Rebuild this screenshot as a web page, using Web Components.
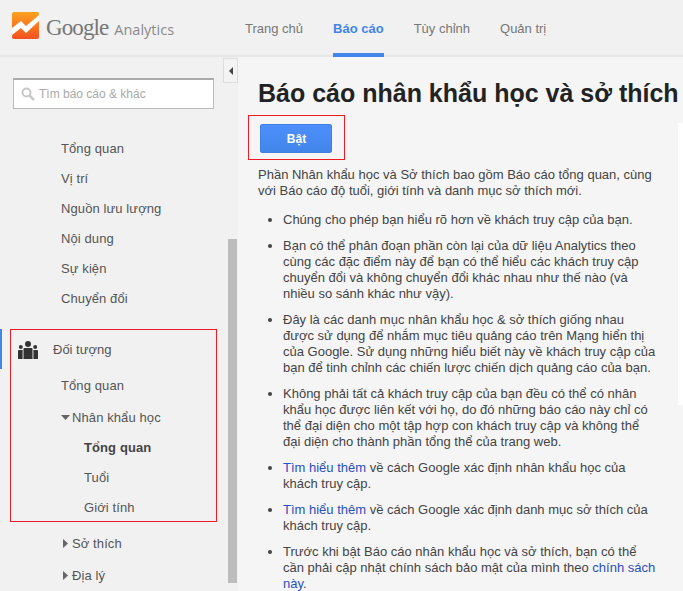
<!DOCTYPE html>
<html>
<head>
<meta charset="utf-8">
<style>
  html, body { margin: 0; padding: 0; height: 591px; overflow: hidden; background: #f1f1f1; }
  body { font-family: "Liberation Sans", Arial, sans-serif; color: #444; }
</style>
</head>
<body>
<ga-app></ga-app>
<script>
class GaHeader extends HTMLElement {
  connectedCallback() {
    this.attachShadow({ mode: 'open' });
    this.shadowRoot.innerHTML = `
      <style>
        :host { display: flex; height: 57px; box-sizing: border-box; border-bottom: 2px solid #e6e6e6; background: #f1f1f1; font-size: 13px; }
        .logo { width: 245px; display: flex; align-items: flex-start; padding: 12px 0 0 12px; box-sizing: border-box; }
        .word { margin-left: 7px; color: #767676; font-size: 23px; line-height: 32px; letter-spacing: -0.9px; font-family: "Liberation Serif", serif; white-space: nowrap; }
        .word span { font-family: "Open Sans", sans-serif; font-size: 14.5px; margin-left: 6px; letter-spacing: 0; color: #8a8a8a; }
        nav { display: flex; gap: 30px; }
        a { height: 57px; box-sizing: border-box; line-height: 57px; color: #777; display: block; }
        a.on { color: #4285e8; font-weight: 700; border-bottom: 4px solid #4285e8; margin-bottom: -2px; }
      </style>
      <div class="logo">
        <svg width="27" height="27" viewBox="0 0 27 27">
          <defs><linearGradient id="g" x1="0" y1="0" x2="0" y2="1"><stop offset="0" stop-color="#fba11f"/><stop offset="1" stop-color="#f4511e"/></linearGradient></defs>
          <rect width="27" height="27" rx="2" fill="url(#g)"/>
          <path d="M0 16L9 9L14 14L27 3V9L14 21L9 16L0 23Z" fill="#fff"/>
        </svg>
        <div class="word">Google<span>Analytics</span></div>
      </div>
      <nav>
        <a>Trang chủ</a>
        <a class="on">Báo cáo</a>
        <a>Tùy chỉnh</a>
        <a>Quản trị</a>
      </nav>
    `;
  }
}

class GaSearch extends HTMLElement {
  connectedCallback() {
    this.attachShadow({ mode: 'open' });
    this.shadowRoot.innerHTML = `
      <style>
        :host { display: flex; align-items: center; gap: 4px; width: 201px; height: 31px; box-sizing: border-box; margin-left: 13px; padding-left: 7px; background: #fff; border: 1px solid #bbb; border-top: 2px solid #aaa; color: #a9a9a9; font-size: 12px; }
      </style>
      <svg width="14" height="14" viewBox="0 0 14 14" fill="none" stroke="#c8c8c8"><circle cx="5.5" cy="5.5" r="4" stroke-width="2"/><path d="M8.5 8.5L13 13" stroke-width="2.5"/></svg>
      <span>Tìm báo cáo &amp; khác</span>
    `;
  }
}

class GaNavItem extends HTMLElement {
  connectedCallback() {
    this.attachShadow({ mode: 'open' });
    const level = this.getAttribute('level') || '1';
    const arrow = this.getAttribute('arrow');
    let mark = '';
    if (arrow === 'down') mark = '<svg width="9" height="5" viewBox="0 0 9 5"><path d="M0 0H9L4.5 5Z" fill="#666"/></svg>';
    if (arrow === 'right') mark = '<svg width="5" height="9" viewBox="0 0 5 9"><path d="M0 0L5 4.5L0 9Z" fill="#666"/></svg>';
    const left = { '1': 61, '2': 84 }[level];
    this.shadowRoot.innerHTML = `
      <style>
        :host { display: flex; align-items: center; height: 30px; padding-left: ${arrow ? (arrow === 'down' ? 61 : 63) : left}px; gap: ${arrow === 'down' ? 2 : 4}px; font-size: 13px; color: #555; letter-spacing: 0.1px; }
        :host([bold]) { font-weight: 700; color: #444; }
      </style>
      ${mark}<slot></slot>
    `;
  }
}

class GaSidebar extends HTMLElement {
  connectedCallback() {
    this.attachShadow({ mode: 'open' });
    this.shadowRoot.innerHTML = `
      <style>
        :host { display: block; position: relative; width: 238px; flex: none; overflow: hidden; }
        .search { box-sizing: border-box; padding-top: 21px; height: 55px; }
        .top { padding-top: 21px; }
        .group { position: relative; margin-top: 15px; }
        .head { display: flex; align-items: center; box-sizing: border-box; height: 41px; padding: 2px 0 0 18px; gap: 15px; font-size: 13px; color: #555; }
        .mark { position: absolute; left: 0; top: 272px; width: 2px; height: 40px; background: #4285e8; }
        .outline { position: absolute; left: 10px; top: 272px; width: 207px; height: 193px; box-sizing: border-box; border: 1px solid #ed1c24; pointer-events: none; }
        .scroll { position: absolute; left: 228px; top: 182px; width: 9px; height: 344px; background: #bdbdbd; }
        .sub { margin-top: -1px; }
        .aftersub { margin-top: 5px; }
        ga-nav-item.gap { height: 32px; }
      </style>
      <div class="search"><ga-search></ga-search></div>
      <div class="top">
        <ga-nav-item>Tổng quan</ga-nav-item>
        <ga-nav-item>Vị trí</ga-nav-item>
        <ga-nav-item>Nguồn lưu lượng</ga-nav-item>
        <ga-nav-item>Nội dung</ga-nav-item>
        <ga-nav-item>Sự kiện</ga-nav-item>
        <ga-nav-item>Chuyển đổi</ga-nav-item>
      </div>
      <div class="group">
        <div class="head">
          <svg width="20" height="18" viewBox="0 0 20 18" fill="#333">
            <circle cx="10" cy="3" r="3"/><circle cx="2.8" cy="6" r="2"/><circle cx="17.2" cy="6" r="2"/>
            <path d="M6.5 7h7a1 1 0 0 1 1 1v10h-9V8a1 1 0 0 1 1-1z"/>
            <path d="M1 9h3.6v9H0v-8a1 1 0 0 1 1-1z"/><path d="M15.4 9H19a1 1 0 0 1 1 1v8h-4.6z"/>
          </svg>
          <span>Đối tượng</span>
        </div>
        <ga-nav-item class="gap">Tổng quan</ga-nav-item>
        <ga-nav-item class="gap" arrow="down">Nhân khẩu học</ga-nav-item>
        <div class="sub">
          <ga-nav-item level="2" bold>Tổng quan</ga-nav-item>
          <ga-nav-item level="2">Tuổi</ga-nav-item>
          <ga-nav-item level="2">Giới tính</ga-nav-item>
        </div>
        <div class="aftersub">
          <ga-nav-item class="gap" arrow="right">Sở thích</ga-nav-item>
          <ga-nav-item class="gap" arrow="right">Địa lý</ga-nav-item>
        </div>
      </div>
      <div class="mark"></div>
      <div class="outline"></div>
      <div class="scroll"></div>
    `;
  }
}

class GaContent extends HTMLElement {
  connectedCallback() {
    this.attachShadow({ mode: 'open' });
    this.shadowRoot.innerHTML = `
      <style>
        :host { display: block; position: relative; flex: 1; background: #f5f5f5; padding: 22px 0 0 20px; font-size: 13px; line-height: 16px; color: #444; overflow: hidden; }
        h1 { margin: 0; font-size: 25px; line-height: 28px; font-weight: 700; color: #222; white-space: nowrap; }
        .btnwrap { width: 97px; height: 45px; margin: 8px 0 7px -10px; box-sizing: border-box; border: 1px solid #ed1c24; padding: 8px 11px; }
        .btn { width: 72px; height: 29px; background: linear-gradient(#4d90fe, #4285e8); border: 1px solid #3f7fe0; box-sizing: border-box; border-radius: 2px; color: #fff; font-weight: 700; font-size: 12px; line-height: 28px; text-align: center; padding-left: 1px; }
        p { margin: 0; white-space: nowrap; }
        ul { margin: 13px 0 0; padding: 0 0 0 25px; white-space: nowrap; }
        li { margin-bottom: 10px; }
        a { color: #2a4fc0; }
        .panel { position: absolute; right: 0; top: 66px; width: 5px; height: 282px; background: #fff; }
      </style>
      <h1>Báo cáo nhân khẩu học và sở thích</h1>
      <div class="btnwrap"><div class="btn">Bật</div></div>
      <p>Phần Nhân khẩu học và Sở thích bao gồm Báo cáo tổng quan, cùng<br>với Báo cáo độ tuổi, giới tính và danh mục sở thích mới.</p>
      <ul>
        <li>Chúng cho phép bạn hiểu rõ hơn về khách truy cập của bạn.</li>
        <li>Bạn có thể phân đoạn phần còn lại của dữ liệu Analytics theo<br>cùng các đặc điểm này để bạn có thể hiểu các khách truy cập<br>chuyển đổi và không chuyển đổi khác nhau như thế nào (và<br>nhiều so sánh khác như vậy).</li>
        <li>Đây là các danh mục nhân khẩu học &amp; sở thích giống nhau<br>được sử dụng để nhắm mục tiêu quảng cáo trên Mạng hiển thị<br>của Google. Sử dụng những hiểu biết này về khách truy cập của<br>bạn để tinh chỉnh các chiến lược chiến dịch quảng cáo của bạn.</li>
        <li>Không phải tất cả khách truy cập của bạn đều có thể có nhân<br>khẩu học được liên kết với họ, do đó những báo cáo này chỉ có<br>thể đại diện cho một tập hợp con khách truy cập và không thể<br>đại diện cho thành phần tổng thể của trang web.</li>
        <li><a>Tìm hiểu thêm</a> về cách Google xác định nhân khẩu học của<br>khách truy cập.</li>
        <li><a>Tìm hiểu thêm</a> về cách Google xác định danh mục sở thích của<br>khách truy cập.</li>
        <li>Trước khi bật Báo cáo nhân khẩu học và sở thích, bạn có thể<br>cần phải cập nhật chính sách bảo mật của mình theo <a>chính sách<br>này</a>.</li>
      </ul>
      <div class="panel"></div>
    `;
  }
}

class GaApp extends HTMLElement {
  connectedCallback() {
    this.attachShadow({ mode: 'open' });
    this.shadowRoot.innerHTML = `
      <style>
        :host { display: block; position: relative; height: 591px; overflow: hidden; }
        .main { display: flex; height: 534px; }
        .toggle { position: absolute; left: 223px; top: 58px; width: 15px; height: 25px; box-sizing: border-box; background: #f3f3f3; border: 1px solid #ddd; display: flex; align-items: center; justify-content: center; }
      </style>
      <ga-header></ga-header>
      <div class="main">
        <ga-sidebar></ga-sidebar>
        <ga-content></ga-content>
      </div>
      <div class="toggle"><svg width="4" height="8" viewBox="0 0 4 8"><path d="M4 0V8L0 4Z" fill="#444"/></svg></div>
    `;
  }
}

customElements.define('ga-nav-item', GaNavItem);
customElements.define('ga-search', GaSearch);
customElements.define('ga-header', GaHeader);
customElements.define('ga-sidebar', GaSidebar);
customElements.define('ga-content', GaContent);
customElements.define('ga-app', GaApp);
</script>
</body>
</html>
